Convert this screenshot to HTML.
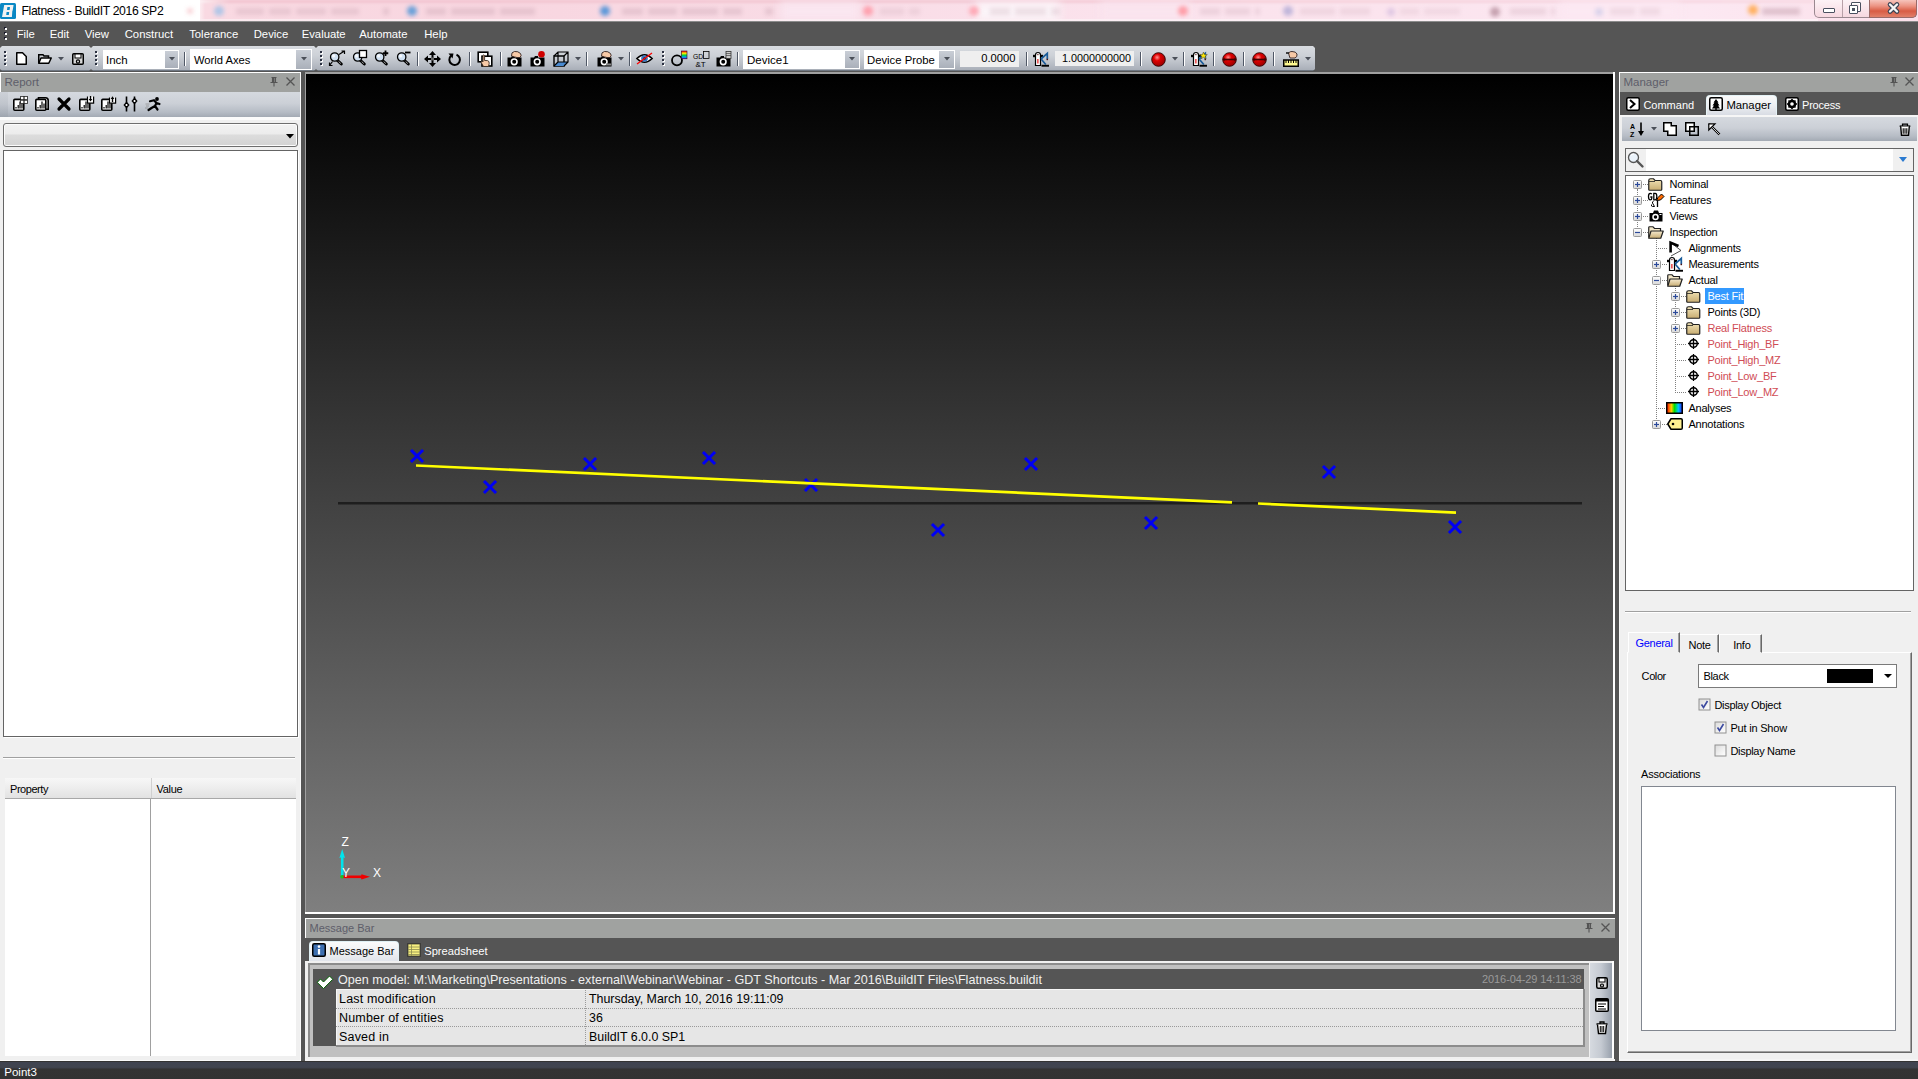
<!DOCTYPE html>
<html><head><meta charset="utf-8"><style>
*{margin:0;padding:0;box-sizing:border-box}
html,body{width:1918px;height:1079px;overflow:hidden;background:#555;font-family:"Liberation Sans",sans-serif;font-size:12px;color:#000;position:relative}
.a{position:absolute}
.t{position:absolute;line-height:1;white-space:nowrap}
svg{overflow:visible}
</style></head><body>
<div class="a" style="left:0px;top:0px;width:1918px;height:21px;background:linear-gradient(90deg,#fff 0,#fff 195px,#f9d9e2 205px,#f8d6e0 500px,#f9dce6 850px,#fbe2ec 1100px,#fbe4ee 1400px,#fce8f2 1700px,#fbe0ea 1918px)"></div>
<div class="a" style="left:0px;top:0px;width:1918px;height:3px;background:linear-gradient(90deg,#fff 0,#fff 190px,#f2c4d0 230px,#f3c8d3 900px,#f6d2dc 1300px,#f8dce6 1918px);filter:blur(1px)"></div>
<div class="a" style="left:0px;top:0px;width:200px;height:21px;background:#fff"></div>
<div class="a" style="left:975px;top:2px;width:85px;height:19px;background:#fbf4f8;filter:blur(4px)"></div>
<div class="a" style="left:780px;top:2px;width:80px;height:19px;background:#fae6f0;filter:blur(4px)"></div>
<div class="a" style="left:1100px;top:2px;width:90px;height:19px;background:#fae4ee;filter:blur(4px)"></div>
<div class="a" style="left:1560px;top:2px;width:120px;height:19px;background:#fce8f2;filter:blur(4px)"></div>
<div class="a" style="left:187px;top:8px;width:6px;height:6px;background:#f4b0b8;border-radius:50%;filter:blur(2px);opacity:0.6"></div>
<div class="a" style="left:214px;top:6px;width:10px;height:10px;background:#a8c4e8;border-radius:50%;filter:blur(2px);opacity:0.9"></div>
<div class="a" style="left:407px;top:6px;width:10px;height:10px;background:#5a9ad8;border-radius:50%;filter:blur(2px);opacity:0.9"></div>
<div class="a" style="left:600px;top:6px;width:10px;height:10px;background:#4a90d8;border-radius:50%;filter:blur(2px);opacity:0.9"></div>
<div class="a" style="left:863px;top:6px;width:10px;height:10px;background:#ff9aa8;border-radius:50%;filter:blur(2px);opacity:0.9"></div>
<div class="a" style="left:969px;top:6px;width:10px;height:10px;background:#ff9aa8;border-radius:50%;filter:blur(2px);opacity:0.8"></div>
<div class="a" style="left:1178px;top:6px;width:10px;height:10px;background:#ff96a0;border-radius:50%;filter:blur(2px);opacity:0.9"></div>
<div class="a" style="left:1283px;top:6px;width:10px;height:10px;background:#b8b0d8;border-radius:50%;filter:blur(2px);opacity:0.9"></div>
<div class="a" style="left:1387px;top:8px;width:8px;height:8px;background:#d8c0e0;border-radius:50%;filter:blur(2px);opacity:0.8"></div>
<div class="a" style="left:1490px;top:7px;width:10px;height:10px;background:#c09aa8;border-radius:50%;filter:blur(2px);opacity:0.9"></div>
<div class="a" style="left:1595px;top:8px;width:8px;height:8px;background:#d0cce8;border-radius:50%;filter:blur(2px);opacity:0.8"></div>
<div class="a" style="left:1748px;top:5px;width:10px;height:10px;background:#ffb060;border-radius:50%;filter:blur(2px);opacity:1"></div>
<div class="a" style="left:236px;top:8px;width:28px;height:7px;background:#c09aa8;filter:blur(2px);opacity:0.28"></div>
<div class="a" style="left:269px;top:8px;width:22px;height:7px;background:#c09aa8;filter:blur(2px);opacity:0.28"></div>
<div class="a" style="left:296px;top:8px;width:30px;height:7px;background:#c09aa8;filter:blur(2px);opacity:0.28"></div>
<div class="a" style="left:331px;top:8px;width:28px;height:7px;background:#c09aa8;filter:blur(2px);opacity:0.28"></div>
<div class="a" style="left:383px;top:8px;width:6px;height:7px;background:#c09aa8;filter:blur(2px);opacity:0.32"></div>
<div class="a" style="left:426px;top:8px;width:20px;height:7px;background:#c09aa8;filter:blur(2px);opacity:0.32"></div>
<div class="a" style="left:451px;top:8px;width:44px;height:7px;background:#c09aa8;filter:blur(2px);opacity:0.32"></div>
<div class="a" style="left:500px;top:8px;width:35px;height:7px;background:#c09aa8;filter:blur(2px);opacity:0.32"></div>
<div class="a" style="left:622px;top:8px;width:21px;height:7px;background:#c09aa8;filter:blur(2px);opacity:0.32"></div>
<div class="a" style="left:648px;top:8px;width:29px;height:7px;background:#c09aa8;filter:blur(2px);opacity:0.32"></div>
<div class="a" style="left:682px;top:8px;width:36px;height:7px;background:#c09aa8;filter:blur(2px);opacity:0.32"></div>
<div class="a" style="left:723px;top:8px;width:19px;height:7px;background:#c09aa8;filter:blur(2px);opacity:0.32"></div>
<div class="a" style="left:765px;top:8px;width:8px;height:7px;background:#c09aa8;filter:blur(2px);opacity:0.32"></div>
<div class="a" style="left:880px;top:8px;width:24px;height:7px;background:#c09aa8;filter:blur(2px);opacity:0.20"></div>
<div class="a" style="left:909px;top:8px;width:11px;height:7px;background:#c09aa8;filter:blur(2px);opacity:0.20"></div>
<div class="a" style="left:990px;top:8px;width:20px;height:7px;background:#c09aa8;filter:blur(2px);opacity:0.24"></div>
<div class="a" style="left:1015px;top:8px;width:31px;height:7px;background:#c09aa8;filter:blur(2px);opacity:0.24"></div>
<div class="a" style="left:1051px;top:8px;width:9px;height:7px;background:#c09aa8;filter:blur(2px);opacity:0.24"></div>
<div class="a" style="left:1200px;top:8px;width:20px;height:7px;background:#c09aa8;filter:blur(2px);opacity:0.24"></div>
<div class="a" style="left:1225px;top:8px;width:25px;height:7px;background:#c09aa8;filter:blur(2px);opacity:0.24"></div>
<div class="a" style="left:1255px;top:8px;width:5px;height:7px;background:#c09aa8;filter:blur(2px);opacity:0.24"></div>
<div class="a" style="left:1300px;top:8px;width:35px;height:7px;background:#c09aa8;filter:blur(2px);opacity:0.20"></div>
<div class="a" style="left:1340px;top:8px;width:30px;height:7px;background:#c09aa8;filter:blur(2px);opacity:0.20"></div>
<div class="a" style="left:1400px;top:8px;width:19px;height:7px;background:#c09aa8;filter:blur(2px);opacity:0.16"></div>
<div class="a" style="left:1424px;top:8px;width:36px;height:7px;background:#c09aa8;filter:blur(2px);opacity:0.16"></div>
<div class="a" style="left:1510px;top:8px;width:36px;height:7px;background:#c09aa8;filter:blur(2px);opacity:0.24"></div>
<div class="a" style="left:1551px;top:8px;width:4px;height:7px;background:#c09aa8;filter:blur(2px);opacity:0.24"></div>
<div class="a" style="left:1610px;top:8px;width:25px;height:7px;background:#c09aa8;filter:blur(2px);opacity:0.20"></div>
<div class="a" style="left:1640px;top:8px;width:20px;height:7px;background:#c09aa8;filter:blur(2px);opacity:0.20"></div>
<div class="a" style="left:1762px;top:8px;width:38px;height:7px;background:#c09aa8;filter:blur(2px);opacity:0.48"></div>
<div class="a" style="left:200px;top:19px;width:1618px;height:2px;background:linear-gradient(90deg,#fbeef2,#fdf4f8);opacity:.8"></div>
<svg class="a" style="left:0;top:0" width="17" height="21" viewBox="0 0 17 21"><path d="M1.5 2.9H14.5Q16 2.9 16 4.5V17.4Q16 19 14.5 19H1.5Q0 19 0 17.4V4.5Q0 2.9 1.5 2.9Z" fill="#0a88c4"/><path d="M4.2 5.1H13.6L12.7 10.3L12.3 11.2L11.9 16.9H2Z" fill="#f2f2f2"/><path d="M7.4 7.1H10L9.6 9.9H7Z M6.6 12.1H9.2L8.8 14.9H6.2Z" fill="#0a88c4"/></svg>
<div class="t" style="left:21.5px;top:5.00px;font-size:12.2px;color:#000;letter-spacing:-0.36px">Flatness - BuildIT 2016 SP2</div>
<div class="a" style="left:1814px;top:0px;width:103px;height:18px;border:1px solid #9a8890;border-top:none;border-radius:0 0 5px 5px;background:linear-gradient(#fdf2f6,#f6d8e0)"></div>
<div class="a" style="left:1842px;top:0px;width:1px;height:17px;background:#b8a0a8"></div>
<div class="a" style="left:1869px;top:0px;width:48px;height:18px;background:linear-gradient(#f6c4bc 0%,#ec9484 35%,#d85c44 65%,#e2806a 100%);border-radius:0 0 5px 0;border:1px solid #9a6a68;border-top:none"></div>
<div class="a" style="left:1823px;top:8px;width:12px;height:5px;background:#fff;border:1px solid #4a5060;border-radius:1px"></div>
<div class="a" style="left:1851px;top:2px;width:10px;height:10px;border:1.5px solid #4a5060;background:transparent;border-radius:1px;box-shadow:inset 0 0 0 1px #fff"></div>
<div class="a" style="left:1849px;top:5px;width:9px;height:9px;border:1.5px solid #4a5060;background:#fff;box-shadow:inset 0 0 0 1.5px #fff;border-radius:1px"></div>
<div class="a" style="left:1852px;top:8px;width:3px;height:3px;background:#4a5060"></div>
<svg class="a" style="left:1886px;top:2px" width="15" height="12" viewBox="0 0 15 12"><path d="M4 2.5L11 9.5M11 2.5L4 9.5" stroke="#3c4454" stroke-width="4.6" stroke-linecap="round"/><path d="M4 2.5L11 9.5M11 2.5L4 9.5" stroke="#f4f4f4" stroke-width="2.4" stroke-linecap="round"/></svg>
<div class="a" style="left:0px;top:21px;width:1918px;height:1px;background:#8c8c8c"></div>
<div class="a" style="left:0px;top:22px;width:1918px;height:24px;background:#555"></div>
<div class="a" style="left:5px;top:28px;width:2px;height:2px;background:#fff;box-shadow:-1px -1px 0 #1a1a2a"></div>
<div class="a" style="left:5px;top:33px;width:2px;height:2px;background:#fff;box-shadow:-1px -1px 0 #1a1a2a"></div>
<div class="a" style="left:5px;top:38px;width:2px;height:2px;background:#fff;box-shadow:-1px -1px 0 #1a1a2a"></div>
<div class="t" style="left:16.7px;top:29.00px;font-size:11.3px;color:#fff;">File</div>
<div class="t" style="left:49.7px;top:29.00px;font-size:11.3px;color:#fff;">Edit</div>
<div class="t" style="left:84.7px;top:29.00px;font-size:11.3px;color:#fff;">View</div>
<div class="t" style="left:124.7px;top:29.00px;font-size:11.3px;color:#fff;">Construct</div>
<div class="t" style="left:189.2px;top:29.00px;font-size:11.3px;color:#fff;">Tolerance</div>
<div class="t" style="left:253.7px;top:29.00px;font-size:11.3px;color:#fff;">Device</div>
<div class="t" style="left:301.7px;top:29.00px;font-size:11.3px;color:#fff;">Evaluate</div>
<div class="t" style="left:359.2px;top:29.00px;font-size:11.3px;color:#fff;">Automate</div>
<div class="t" style="left:424.2px;top:29.00px;font-size:11.3px;color:#fff;">Help</div>
<div class="a" style="left:0px;top:46px;width:91px;height:25px;background:linear-gradient(#d8dbe0 0%,#cdd1d7 40%,#b9bec6 75%,#a9afb8 100%);border-bottom:1px solid #6f7782;clip-path:polygon(2px 0,89px 0,91px 2px,91px 23px,89px 25px,2px 25px,0 23px,0 2px)"></div>
<div class="a" style="left:91px;top:46px;width:225px;height:25px;background:linear-gradient(#d8dbe0 0%,#cdd1d7 40%,#b9bec6 75%,#a9afb8 100%);border-bottom:1px solid #6f7782;clip-path:polygon(2px 0,223px 0,225px 2px,225px 23px,223px 25px,2px 25px,0 23px,0 2px)"></div>
<div class="a" style="left:316px;top:46px;width:999px;height:25px;background:linear-gradient(#d8dbe0 0%,#cdd1d7 40%,#b9bec6 75%,#a9afb8 100%);border-bottom:1px solid #6f7782;clip-path:polygon(2px 0,997px 0,999px 2px,999px 23px,997px 25px,2px 25px,0 23px,0 2px)"></div>
<div class="a" style="left:5px;top:52px;width:2px;height:2px;background:#fff"></div>
<div class="a" style="left:4px;top:51px;width:2px;height:2px;background:#2a3040"></div>
<div class="a" style="left:5px;top:56px;width:2px;height:2px;background:#fff"></div>
<div class="a" style="left:4px;top:55px;width:2px;height:2px;background:#2a3040"></div>
<div class="a" style="left:5px;top:60px;width:2px;height:2px;background:#fff"></div>
<div class="a" style="left:4px;top:59px;width:2px;height:2px;background:#2a3040"></div>
<div class="a" style="left:5px;top:64px;width:2px;height:2px;background:#fff"></div>
<div class="a" style="left:4px;top:63px;width:2px;height:2px;background:#2a3040"></div>
<div class="a" style="left:96px;top:52px;width:2px;height:2px;background:#fff"></div>
<div class="a" style="left:95px;top:51px;width:2px;height:2px;background:#2a3040"></div>
<div class="a" style="left:96px;top:56px;width:2px;height:2px;background:#fff"></div>
<div class="a" style="left:95px;top:55px;width:2px;height:2px;background:#2a3040"></div>
<div class="a" style="left:96px;top:60px;width:2px;height:2px;background:#fff"></div>
<div class="a" style="left:95px;top:59px;width:2px;height:2px;background:#2a3040"></div>
<div class="a" style="left:96px;top:64px;width:2px;height:2px;background:#fff"></div>
<div class="a" style="left:95px;top:63px;width:2px;height:2px;background:#2a3040"></div>
<div class="a" style="left:321px;top:52px;width:2px;height:2px;background:#fff"></div>
<div class="a" style="left:320px;top:51px;width:2px;height:2px;background:#2a3040"></div>
<div class="a" style="left:321px;top:56px;width:2px;height:2px;background:#fff"></div>
<div class="a" style="left:320px;top:55px;width:2px;height:2px;background:#2a3040"></div>
<div class="a" style="left:321px;top:60px;width:2px;height:2px;background:#fff"></div>
<div class="a" style="left:320px;top:59px;width:2px;height:2px;background:#2a3040"></div>
<div class="a" style="left:321px;top:64px;width:2px;height:2px;background:#fff"></div>
<div class="a" style="left:320px;top:63px;width:2px;height:2px;background:#2a3040"></div>
<div class="a" style="left:663px;top:52px;width:2px;height:2px;background:#fff"></div>
<div class="a" style="left:662px;top:51px;width:2px;height:2px;background:#2a3040"></div>
<div class="a" style="left:663px;top:56px;width:2px;height:2px;background:#fff"></div>
<div class="a" style="left:662px;top:55px;width:2px;height:2px;background:#2a3040"></div>
<div class="a" style="left:663px;top:60px;width:2px;height:2px;background:#fff"></div>
<div class="a" style="left:662px;top:59px;width:2px;height:2px;background:#2a3040"></div>
<div class="a" style="left:663px;top:64px;width:2px;height:2px;background:#fff"></div>
<div class="a" style="left:662px;top:63px;width:2px;height:2px;background:#2a3040"></div>
<svg class="a" style="left:16px;top:52px" width="11" height="13" viewBox="0 0 11 13"><path d="M0.75 0.75H6.5L10.25 4.5V12.25H0.75Z" fill="#fff" stroke="#000" stroke-width="1.5" stroke-linejoin="round"/></svg>
<svg class="a" style="left:38px;top:54px" width="14" height="10" viewBox="0 0 14 10"><path d="M0.75 9.25V0.75H5L6 2H10.5V4" fill="none" stroke="#000" stroke-width="1.5"/><path d="M0.75 9.25L3 4H13.25L10.75 9.25Z" fill="#fff" stroke="#000" stroke-width="1.5" stroke-linejoin="round"/></svg>
<svg class="a" style="left:58px;top:57px" width="6" height="4" viewBox="0 0 6 4"><path d="M0 0H6L3 3.5Z" fill="#4a4f58"/></svg>
<svg class="a" style="left:72px;top:53px" width="12" height="12" viewBox="0 0 12 12"><rect x="0.75" y="0.75" width="10.5" height="10.5" rx="1" fill="#d8d8d8" stroke="#000" stroke-width="1.5"/><rect x="3" y="1" width="6" height="4" fill="#fff" stroke="#000" stroke-width="1"/><circle cx="6" cy="8.5" r="1.6" fill="none" stroke="#000" stroke-width="1.2"/></svg>
<div class="a" style="left:103px;top:50px;width:76px;height:19px;background:#fff"></div>
<div class="a" style="left:165px;top:51px;width:13px;height:17px;background:linear-gradient(#c9ced6,#aab0ba)"></div>
<svg class="a" style="left:168.5px;top:57px" width="6" height="4" viewBox="0 0 6 4"><path d="M0 0H6L3 3.5Z" fill="#4a4f58"/></svg>
<div class="t" style="left:106px;top:55.00px;font-size:11.5px;color:#000;">Inch</div>
<div class="a" style="left:184px;top:52px;width:1px;height:14px;background:#505866"></div>
<div class="a" style="left:185px;top:52px;width:1px;height:14px;background:#fff"></div>
<div class="a" style="left:190px;top:49px;width:122px;height:21px;background:#fff"></div>
<div class="a" style="left:296px;top:50px;width:15px;height:19px;background:linear-gradient(#c9ced6,#aab0ba)"></div>
<svg class="a" style="left:300.5px;top:57px" width="6" height="4" viewBox="0 0 6 4"><path d="M0 0H6L3 3.5Z" fill="#4a4f58"/></svg>
<div class="t" style="left:194px;top:55.00px;font-size:11.2px;color:#000;">World Axes</div>
<svg class="a" style="left:329px;top:51px" width="17" height="16" viewBox="0 0 17 16"><path d="M8 9L12.3 13" stroke="#000" stroke-width="3" stroke-linecap="round"/><path d="M8.5 9.5L12 12.7" stroke="#fff" stroke-width=".9" stroke-dasharray="1 1"/><circle cx="5.7" cy="6" r="4.2" fill="#cfe0f2" stroke="#000" stroke-width="1.3"/><circle cx="4.6" cy="4.9" r="1.6" fill="#fff" opacity=".8"/><path d="M10 3.5L15.5 0M12.5 0H15.5V3M3.5 10.5L0.5 14.5M0.5 11.5V14.5H3.5" stroke="#000" stroke-width="1.2" fill="none"/></svg>
<svg class="a" style="left:352px;top:51px" width="17" height="16" viewBox="0 0 17 16"><path d="M8 9L12.3 13" stroke="#000" stroke-width="3" stroke-linecap="round"/><path d="M8.5 9.5L12 12.7" stroke="#fff" stroke-width=".9" stroke-dasharray="1 1"/><circle cx="5.7" cy="6" r="4.2" fill="#cfe0f2" stroke="#000" stroke-width="1.3"/><circle cx="4.6" cy="4.9" r="1.6" fill="#fff" opacity=".8"/><rect x="7.5" y="-0.5" width="7" height="7" fill="#fff" stroke="#000" stroke-width="1.3"/></svg>
<svg class="a" style="left:374px;top:51px" width="17" height="16" viewBox="0 0 17 16"><path d="M8 9L12.3 13" stroke="#000" stroke-width="3" stroke-linecap="round"/><path d="M8.5 9.5L12 12.7" stroke="#fff" stroke-width=".9" stroke-dasharray="1 1"/><circle cx="5.7" cy="6" r="4.2" fill="#cfe0f2" stroke="#000" stroke-width="1.3"/><circle cx="4.6" cy="4.9" r="1.6" fill="#fff" opacity=".8"/><path d="M11.5 -0.5V5M8.75 2.25H14.25" stroke="#000" stroke-width="1.8"/></svg>
<svg class="a" style="left:396px;top:51px" width="17" height="16" viewBox="0 0 17 16"><path d="M8 9L12.3 13" stroke="#000" stroke-width="3" stroke-linecap="round"/><path d="M8.5 9.5L12 12.7" stroke="#fff" stroke-width=".9" stroke-dasharray="1 1"/><circle cx="5.7" cy="6" r="4.2" fill="#cfe0f2" stroke="#000" stroke-width="1.3"/><circle cx="4.6" cy="4.9" r="1.6" fill="#fff" opacity=".8"/><path d="M9 1.5H14.5" stroke="#000" stroke-width="1.8"/></svg>
<div class="a" style="left:417px;top:52px;width:1px;height:14px;background:#505866"></div>
<div class="a" style="left:418px;top:52px;width:1px;height:14px;background:#fff"></div>
<svg class="a" style="left:424px;top:51px" width="17" height="16" viewBox="0 0 17 16"><path d="M8.5 0L12 4H5Z M8.5 16L12 12H5Z M0 8L4 4.5V11.5Z M17 8L13 4.5V11.5Z" fill="#000"/><path d="M8.5 3V13M3 8H14" stroke="#000" stroke-width="2"/><path d="M7 6.5H10V9.5H7Z" fill="#666"/></svg>
<svg class="a" style="left:448px;top:53px" width="14" height="13" viewBox="0 0 14 13"><path d="M3 2.8A5.3 5.3 0 1 0 8.5 1.7" fill="none" stroke="#000" stroke-width="2"/><path d="M0.5 0.5L5.5 0.5L4.5 5.5Z" fill="#000"/></svg>
<div class="a" style="left:469px;top:52px;width:1px;height:14px;background:#505866"></div>
<div class="a" style="left:470px;top:52px;width:1px;height:14px;background:#fff"></div>
<svg class="a" style="left:477px;top:51px" width="17" height="17" viewBox="0 0 17 17"><rect x="1.2" y="1.2" width="9.6" height="9.6" fill="#fff" stroke="#000" stroke-width="1.6"/><rect x="5" y="5.2" width="9.8" height="9.8" fill="#fff" stroke="#000" stroke-width="1.6"/><path d="M6 4.5Q6.8 3.2 7.6 4.5V9.5L10.5 9.6Q12.5 10 12.2 12.5L11.5 15.5H6.5L4.2 11.5Q3.8 10 5.2 10.3L6 11Z" fill="#f7c9a6" stroke="#3a2a20" stroke-width=".9"/></svg>
<div class="a" style="left:500px;top:52px;width:1px;height:14px;background:#505866"></div>
<div class="a" style="left:501px;top:52px;width:1px;height:14px;background:#fff"></div>
<svg class="a" style="left:507px;top:51px" width="16" height="16" viewBox="0 0 16 16"><path d="M0.5 6.5H4L5 5H8V6.5H14.5V15.5H0.5Z" fill="#000"/><circle cx="7.2" cy="10.8" r="2.8" fill="none" stroke="#fff" stroke-width="1.6"/><path d="M4.5 5Q4 1 7.5 0.5Q11 0 13.5 2.5Q15 4.5 13 6.5L10 6.5Q7 6 4.5 5Z" fill="#f7c9a6" stroke="#302020" stroke-width="0.9"/></svg>
<svg class="a" style="left:530px;top:51px" width="16" height="16" viewBox="0 0 16 16"><path d="M0.5 6.5H4L5 5H8V6.5H14.5V15.5H0.5Z" fill="#000"/><circle cx="7.2" cy="10.8" r="2.8" fill="none" stroke="#fff" stroke-width="1.6"/><circle cx="11.5" cy="3.3" r="3.3" fill="#d00000"/></svg>
<svg class="a" style="left:553px;top:51px" width="16" height="16" viewBox="0 0 16 16"><path d="M1 15H11V5H1Z" fill="none" stroke="#000" stroke-width="1.4"/><path d="M1 15L5 11H15L11 15Z" fill="#4a8ad0"/><path d="M1 5L5 1H15V11L11 15M11 5L15 1M5 1V11H15M1 15L5 11" fill="none" stroke="#000" stroke-width="1.2"/></svg>
<svg class="a" style="left:574.5px;top:57px" width="6" height="4" viewBox="0 0 6 4"><path d="M0 0H6L3 3.5Z" fill="#4a4f58"/></svg>
<div class="a" style="left:586px;top:52px;width:1px;height:14px;background:#505866"></div>
<div class="a" style="left:587px;top:52px;width:1px;height:14px;background:#fff"></div>
<svg class="a" style="left:597px;top:51px" width="16" height="16" viewBox="0 0 16 16"><path d="M0.5 6.5H4L5 5H8V6.5H14.5V15.5H0.5Z" fill="#000"/><circle cx="7.2" cy="10.8" r="2.8" fill="none" stroke="#fff" stroke-width="1.6"/><path d="M4.5 5Q4 1 7.5 0.5Q11 0 13.5 2.5Q15 4.5 13 6.5L10 6.5Q7 6 4.5 5Z" fill="#f7c9a6" stroke="#302020" stroke-width="0.9"/><rect x="9" y="12.5" width="5" height="2" fill="#888"/></svg>
<svg class="a" style="left:617.5px;top:57px" width="6" height="4" viewBox="0 0 6 4"><path d="M0 0H6L3 3.5Z" fill="#4a4f58"/></svg>
<div class="a" style="left:629px;top:52px;width:1px;height:14px;background:#505866"></div>
<div class="a" style="left:630px;top:52px;width:1px;height:14px;background:#fff"></div>
<svg class="a" style="left:636px;top:53px" width="17" height="11" viewBox="0 0 17 11"><path d="M0.8 5.5Q8.5 -2 16.2 5.5Q8.5 13 0.8 5.5Z" fill="#fff" stroke="#000" stroke-width="1.4"/><circle cx="8.5" cy="5.5" r="3.3" fill="#3a78c0"/><circle cx="8.5" cy="5.5" r="1.3" fill="#123"/><path d="M1 11L16 0" stroke="#ff0000" stroke-width="1.3"/></svg>
<svg class="a" style="left:670px;top:50px" width="18" height="17" viewBox="0 0 18 17"><defs><linearGradient id="rb" x1="0" y1="0" x2="0" y2="1"><stop offset="0" stop-color="#ff0000"/><stop offset=".3" stop-color="#ffee00"/><stop offset=".55" stop-color="#00d040"/><stop offset=".8" stop-color="#00a0ff"/><stop offset="1" stop-color="#6000c0"/></linearGradient></defs><circle cx="7" cy="10.3" r="5" fill="none" stroke="#000" stroke-width="1.8"/><rect x="11.3" y="1" width="5.7" height="7.8" fill="url(#rb)" stroke="#300030" stroke-width=".6"/></svg>
<svg class="a" style="left:693px;top:51px" width="17" height="16" viewBox="0 0 17 16"><text x="0" y="7.5" font-family="Liberation Sans" font-size="8" fill="#000" transform="scale(.85 1)">GD</text><rect x="10.5" y="0.5" width="5.5" height="7" fill="none" stroke="#000" stroke-width="0.8"/><text x="2.5" y="15.5" font-family="Liberation Sans" font-size="8" fill="#000">&amp;T</text></svg>
<svg class="a" style="left:716px;top:51px" width="16" height="16" viewBox="0 0 16 16"><path d="M0.5 6.5H4L5 5H8V6.5H14.5V15.5H0.5Z" fill="#000"/><circle cx="7.2" cy="10.8" r="2.8" fill="none" stroke="#fff" stroke-width="1.6"/><rect x="10" y="0.5" width="5" height="7" fill="#ccc" stroke="#333" stroke-width="0.8"/><path d="M10 2.5H15M10 4.5H15" stroke="#333" stroke-width=".6"/></svg>
<div class="a" style="left:737px;top:52px;width:1px;height:14px;background:#505866"></div>
<div class="a" style="left:738px;top:52px;width:1px;height:14px;background:#fff"></div>
<div class="a" style="left:743px;top:50px;width:117px;height:19px;background:#fff"></div>
<div class="a" style="left:845px;top:51px;width:14px;height:17px;background:linear-gradient(#c9ced6,#aab0ba)"></div>
<svg class="a" style="left:849.0px;top:57px" width="6" height="4" viewBox="0 0 6 4"><path d="M0 0H6L3 3.5Z" fill="#4a4f58"/></svg>
<div class="t" style="left:747px;top:55.00px;font-size:11.5px;color:#000;">Device1</div>
<div class="a" style="left:864px;top:50px;width:91px;height:19px;background:#fff"></div>
<div class="a" style="left:939px;top:51px;width:15px;height:17px;background:linear-gradient(#c9ced6,#aab0ba)"></div>
<svg class="a" style="left:943.5px;top:57px" width="6" height="4" viewBox="0 0 6 4"><path d="M0 0H6L3 3.5Z" fill="#4a4f58"/></svg>
<div class="t" style="left:867px;top:55.00px;font-size:11.3px;color:#000;">Device Probe</div>
<div class="a" style="left:960px;top:51px;width:59px;height:16px;background:#efefef"></div>
<div class="t" style="right:902.5px;top:53.00px;font-size:11.2px;color:#000;">0.0000</div>
<div class="a" style="left:1026px;top:52px;width:1px;height:14px;background:#505866"></div>
<div class="a" style="left:1027px;top:52px;width:1px;height:14px;background:#fff"></div>
<svg class="a" style="left:1033px;top:51px" width="17" height="16" viewBox="0 0 17 16"><rect x="0" y="3.8" width="3" height="2.4" fill="#000"/><rect x="7" y="3.8" width="3" height="2.4" fill="#000"/><path d="M2.5 14.5V4Q2.5 1.5 5 1.5Q7.5 1.5 7.5 4V14.5Z" fill="#fff" stroke="#000" stroke-width="1.2"/><rect x="4.3" y="3" width="1.2" height="1.2" fill="#602020"/><path d="M4.9 8V12.5" stroke="#e00000" stroke-width="1.1"/><path d="M8 8L14.3 2.3V8.5M8.3 8.2L12.8 13.5" stroke="#1a5c9a" stroke-width="1.7" fill="none"/><rect x="13.6" y="7.8" width="1.4" height="1.4" fill="#501010"/><rect x="8.5" y="13.8" width="7.5" height="1.9" fill="#000"/></svg>
<div class="a" style="left:1055px;top:51px;width:79px;height:15px;background:#efefef"></div>
<div class="t" style="left:1062px;top:53.00px;font-size:10.8px;color:#000;">1.0000000000</div>
<div class="a" style="left:1140px;top:52px;width:1px;height:14px;background:#505866"></div>
<div class="a" style="left:1141px;top:52px;width:1px;height:14px;background:#fff"></div>
<svg class="a" style="left:1150.5px;top:51.5px" width="15" height="15" viewBox="0 0 15 15"><defs><radialGradient id="rg1158" cx=".4" cy=".35" r=".7"><stop offset="0" stop-color="#ff9090"/><stop offset=".35" stop-color="#e00000"/><stop offset="1" stop-color="#900000"/></radialGradient></defs><circle cx="7.5" cy="7.5" r="6.8" fill="url(#rg1158)" stroke="#300000" stroke-width=".9"/></svg>
<svg class="a" style="left:1171.5px;top:57px" width="6" height="4" viewBox="0 0 6 4"><path d="M0 0H6L3 3.5Z" fill="#4a4f58"/></svg>
<div class="a" style="left:1183px;top:52px;width:1px;height:14px;background:#505866"></div>
<div class="a" style="left:1184px;top:52px;width:1px;height:14px;background:#fff"></div>
<svg class="a" style="left:1191px;top:51px" width="17" height="16" viewBox="0 0 17 16"><rect x="0" y="3.8" width="3" height="2.4" fill="#000"/><rect x="7" y="3.8" width="3" height="2.4" fill="#000"/><path d="M2.5 14.5V4Q2.5 1.5 5 1.5Q7.5 1.5 7.5 4V14.5Z" fill="#fff" stroke="#000" stroke-width="1.2"/><rect x="4.3" y="3" width="1.2" height="1.2" fill="#602020"/><path d="M4.9 8V12.5" stroke="#e00000" stroke-width="1.1"/><path d="M8 8L14.3 2.3V8.5M8.3 8.2L12.8 13.5" stroke="#1a5c9a" stroke-width="1.7" fill="none"/><rect x="13.6" y="7.8" width="1.4" height="1.4" fill="#501010"/><rect x="8.5" y="13.8" width="7.5" height="1.9" fill="#000"/><path d="M12.5 1L13.6 3.6H16.3L14.2 5.2L15 7.8L12.5 6.3L10 7.8L10.8 5.2L8.7 3.6H11.4Z" fill="#ffe800" stroke="#333" stroke-width=".5"/></svg>
<div class="a" style="left:1213px;top:52px;width:1px;height:14px;background:#505866"></div>
<div class="a" style="left:1214px;top:52px;width:1px;height:14px;background:#fff"></div>
<svg class="a" style="left:1221.5px;top:51.5px" width="15" height="15" viewBox="0 0 15 15"><defs><radialGradient id="rg1229" cx=".4" cy=".35" r=".7"><stop offset="0" stop-color="#ff9090"/><stop offset=".35" stop-color="#e00000"/><stop offset="1" stop-color="#900000"/></radialGradient></defs><circle cx="7.5" cy="7.5" r="6.8" fill="url(#rg1229)" stroke="#300000" stroke-width=".9"/><path d="M1 7.5H14" stroke="#400000" stroke-width="1.6"/><path d="M0.5 7.5L2.5 5.8V9.2ZM14.5 7.5L12.5 5.8V9.2Z" fill="#400000"/></svg>
<div class="a" style="left:1243px;top:52px;width:1px;height:14px;background:#505866"></div>
<div class="a" style="left:1244px;top:52px;width:1px;height:14px;background:#fff"></div>
<svg class="a" style="left:1251.5px;top:51.5px" width="15" height="15" viewBox="0 0 15 15"><defs><radialGradient id="rg1259" cx=".4" cy=".35" r=".7"><stop offset="0" stop-color="#ff9090"/><stop offset=".35" stop-color="#e00000"/><stop offset="1" stop-color="#900000"/></radialGradient></defs><circle cx="7.5" cy="7.5" r="6.8" fill="url(#rg1259)" stroke="#300000" stroke-width=".9"/><path d="M1 7.5H14" stroke="#400000" stroke-width="1.6"/><path d="M0.5 7.5L2.5 5.8V9.2ZM14.5 7.5L12.5 5.8V9.2Z" fill="#400000"/></svg>
<div class="a" style="left:1273px;top:52px;width:1px;height:14px;background:#505866"></div>
<div class="a" style="left:1274px;top:52px;width:1px;height:14px;background:#fff"></div>
<svg class="a" style="left:1283px;top:51px" width="16" height="16" viewBox="0 0 16 16"><path d="M6 4Q5 0.5 9 0.5Q13 0.5 14 3Q14.5 6 12 7H7Z" fill="#f7c9a6" stroke="#302020" stroke-width=".9"/><path d="M3 2H6" stroke="#000" stroke-width="1.4"/><rect x="0.75" y="9" width="14.5" height="6.25" fill="#fffa90" stroke="#000" stroke-width="1.5"/><path d="M3 9V12M5.5 9V12M8 9V12M10.5 9V12M13 9V12" stroke="#000" stroke-width="1"/></svg>
<svg class="a" style="left:1304.5px;top:57px" width="6" height="4" viewBox="0 0 6 4"><path d="M0 0H6L3 3.5Z" fill="#4a4f58"/></svg>
<div class="a" style="left:0px;top:71px;width:1918px;height:1px;background:#555"></div>
<div class="a" style="left:0px;top:72px;width:301px;height:989px;background:#f0f0f0"></div>
<div class="a" style="left:0px;top:72px;width:301px;height:1px;background:#fff"></div>
<div class="a" style="left:0px;top:72px;width:1px;height:20px;background:#fff"></div>
<div class="a" style="left:300px;top:72px;width:1px;height:989px;background:#fafafa"></div>
<div class="a" style="left:1px;top:73px;width:299px;height:19px;background:#a0a2a0"></div>
<div class="t" style="left:4.5px;top:77.00px;font-size:11.5px;color:#5e5e6a;">Report</div>
<svg class="a" style="left:270px;top:77px" width="8" height="10" viewBox="0 0 8 10"><path d="M1.5 0.5H6.5M2.5 0.5V5.5M5.5 0.5V5.5M0.5 5.5H7.5M4 5.5V9.5" stroke="#555" stroke-width="1.1" fill="none"/><rect x="2.5" y="0.5" width="2" height="5" fill="#555"/></svg>
<svg class="a" style="left:286px;top:77px" width="9" height="9" viewBox="0 0 9 9"><path d="M0.5 0.5L8.5 8.5M8.5 0.5L0.5 8.5" stroke="#555" stroke-width="1.3"/></svg>
<div class="a" style="left:0px;top:92px;width:300px;height:25px;background:linear-gradient(#d5d9df 0%,#ccd0d7 45%,#b6bcc5 80%,#a3aab4 100%)"></div>
<div class="a" style="left:0px;top:92px;width:8px;height:25px;background:linear-gradient(#c8ccd3,#b8bdc5 50%,#9aa1ab);opacity:.6"></div>
<div class="a" style="left:0px;top:117px;width:300px;height:3px;background:#fbfbfb"></div>
<svg class="a" style="left:13px;top:96px" width="16" height="16" viewBox="0 0 16 16"><rect x="0.8" y="3.4" width="10" height="10.8" rx="1" fill="#fff" stroke="#000" stroke-width="1.6"/><path d="M3 12.5V11M5.2 12.5V9M7 12.5V5.5M9 12.5V7.5" stroke="#000" stroke-width="1.2"/><rect x="7.2" y="0" width="7.6" height="7.9" fill="#222"/><rect x="8" y="0.8" width="2.4" height="2.4" fill="#fff"/><rect x="11.6" y="0.8" width="2.4" height="2.4" fill="#fff"/><rect x="8" y="4.7" width="2.4" height="2.4" fill="#fff"/><rect x="11.6" y="4.7" width="2.4" height="2.4" fill="#fff"/></svg>
<svg class="a" style="left:35px;top:96px" width="16" height="16" viewBox="0 0 16 16"><path d="M3.5 3V1.8H10.5Q13.2 1.8 13.2 4.5V13.2H11" fill="#fff" stroke="#000" stroke-width="1.6"/><rect x="0.8" y="3.4" width="10" height="10.8" rx="1" fill="#fff" stroke="#000" stroke-width="1.6"/><path d="M3 12.5V11M5.2 12.5V9M7 12.5V5.5M9 12.5V7.5" stroke="#000" stroke-width="1.2"/></svg>
<svg class="a" style="left:57px;top:97px" width="14" height="14" viewBox="0 0 14 14"><path d="M2 2L12 12M12 2L2 12" stroke="#000" stroke-width="3.2" stroke-linecap="round"/></svg>
<svg class="a" style="left:79px;top:96px" width="16" height="16" viewBox="0 0 16 16"><rect x="0.8" y="3.4" width="10" height="10.8" rx="1" fill="#fff" stroke="#000" stroke-width="1.6"/><path d="M3 12.5V11M5.2 12.5V9M7 12.5V5.5M9 12.5V7.5" stroke="#000" stroke-width="1.2"/><path d="M8.5 0.6V7.2H14.6V0.6" fill="#fff" stroke="#000" stroke-width="1.2"/><path d="M11.5 0V3.5" stroke="#000" stroke-width="1.4"/><path d="M9.6 3H13.4L11.5 5.6Z" fill="#000"/></svg>
<svg class="a" style="left:101px;top:96px" width="16" height="16" viewBox="0 0 16 16"><rect x="0.8" y="3.4" width="10" height="10.8" rx="1" fill="#fff" stroke="#000" stroke-width="1.6"/><path d="M3 12.5V11M5.2 12.5V9M7 12.5V5.5M9 12.5V7.5" stroke="#000" stroke-width="1.2"/><path d="M8.5 1.5V7.2H14.6V1.5" fill="#fff" stroke="#000" stroke-width="1.2"/><path d="M11.5 6V2.5" stroke="#000" stroke-width="1.4"/><path d="M9.6 3H13.4L11.5 0.2Z" fill="#000"/></svg>
<svg class="a" style="left:124px;top:96px" width="13" height="16" viewBox="0 0 13 16"><path d="M2.5 0.5V15.5M10.5 0.5V15.5" stroke="#000" stroke-width="1.6"/><path d="M2.5 6.5L4.7 9L2.5 11.5L0.3 9Z" fill="#fff" stroke="#000" stroke-width="1.3"/><path d="M10.5 2.5L12.7 5L10.5 7.5L8.3 5Z" fill="#fff" stroke="#000" stroke-width="1.3"/></svg>
<svg class="a" style="left:145px;top:97px" width="16" height="14" viewBox="0 0 16 14"><circle cx="12" cy="2" r="1.9" fill="#000"/><path d="M5 4.2L9 3.2L11.5 6L10 9L12.5 12.5M10 9L6.5 11L3.5 13M11.5 6L14.5 7" stroke="#000" stroke-width="2.2" fill="none" stroke-linecap="round" stroke-linejoin="round"/><path d="M0.5 7H4.5M1 9H4M0 11H3" stroke="#888" stroke-width=".7"/></svg>
<div class="a" style="left:3px;top:123px;width:295px;height:24px;border:1px solid #6e6e6e;border-radius:3px;background:linear-gradient(#f2f2f2 0%,#ececec 45%,#dcdcdc 50%,#d3d3d3 100%);box-shadow:inset 0 0 0 1px #fcfcfc"></div>
<svg class="a" style="left:286px;top:134px" width="8" height="5" viewBox="0 0 8 5"><path d="M0 0H8L4 4.5Z" fill="#000"/></svg>
<div class="a" style="left:3px;top:150px;width:295px;height:587px;background:#fff;border:1px solid #646464;box-shadow:1px 1px 0 #fff"></div>
<div class="a" style="left:3px;top:757px;width:292px;height:1px;background:#a0a0a0"></div>
<div class="a" style="left:3px;top:758px;width:292px;height:1px;background:#fff"></div>
<div class="a" style="left:5px;top:778px;width:291px;height:21px;background:linear-gradient(#f7f7f7,#ededed 50%,#e2e2e2);border-bottom:1px solid #a8a8a8"></div>
<div class="a" style="left:151px;top:778px;width:1px;height:20px;background:#d0d0d0"></div>
<div class="t" style="left:10px;top:784.00px;font-size:11px;color:#000;letter-spacing:-0.45px">Property</div>
<div class="t" style="left:156.5px;top:784.00px;font-size:11px;color:#000;letter-spacing:-0.3px">Value</div>
<div class="a" style="left:5px;top:799px;width:291px;height:257px;background:#fff"></div>
<div class="a" style="left:150px;top:799px;width:1px;height:257px;background:#a0a0a0"></div>
<div class="a" style="left:305px;top:72px;width:1310px;height:842px;background:#a0a0a0"></div>
<div class="a" style="left:1613px;top:72px;width:2px;height:842px;background:#fff"></div>
<div class="a" style="left:305px;top:912px;width:1310px;height:2px;background:#fff"></div>
<div class="a" style="left:306px;top:74px;width:1307px;height:838px;background:linear-gradient(#000 0%,#0a0a0a 8%,#404040 50%,#7f7f7f 100%)"></div>
<svg class="a" style="left:306px;top:74px" width="1307" height="838" viewBox="0 0 1307 838"><path d="M32 429.3H1276" stroke="#1e1e1e" stroke-width="2.6"/></svg>
<svg class="a" style="left:409.5px;top:448.5px" width="14" height="14" viewBox="0 0 14 14"><path d="M2 2L12 12M12 2L2 12" stroke="#0000f4" stroke-width="3" stroke-linecap="square"/></svg>
<svg class="a" style="left:482.5px;top:480.4px" width="14" height="14" viewBox="0 0 14 14"><path d="M2 2L12 12M12 2L2 12" stroke="#0000f4" stroke-width="3" stroke-linecap="square"/></svg>
<svg class="a" style="left:583px;top:457.4px" width="14" height="14" viewBox="0 0 14 14"><path d="M2 2L12 12M12 2L2 12" stroke="#0000f4" stroke-width="3" stroke-linecap="square"/></svg>
<svg class="a" style="left:701.7px;top:451.4px" width="14" height="14" viewBox="0 0 14 14"><path d="M2 2L12 12M12 2L2 12" stroke="#0000f4" stroke-width="3" stroke-linecap="square"/></svg>
<svg class="a" style="left:803.5px;top:478px" width="14" height="14" viewBox="0 0 14 14"><path d="M2 2L12 12M12 2L2 12" stroke="#0000f4" stroke-width="3" stroke-linecap="square"/></svg>
<svg class="a" style="left:931px;top:523px" width="14" height="14" viewBox="0 0 14 14"><path d="M2 2L12 12M12 2L2 12" stroke="#0000f4" stroke-width="3" stroke-linecap="square"/></svg>
<svg class="a" style="left:1024px;top:457.4px" width="14" height="14" viewBox="0 0 14 14"><path d="M2 2L12 12M12 2L2 12" stroke="#0000f4" stroke-width="3" stroke-linecap="square"/></svg>
<svg class="a" style="left:1144px;top:515.9px" width="14" height="14" viewBox="0 0 14 14"><path d="M2 2L12 12M12 2L2 12" stroke="#0000f4" stroke-width="3" stroke-linecap="square"/></svg>
<svg class="a" style="left:1322.4px;top:464.8px" width="14" height="14" viewBox="0 0 14 14"><path d="M2 2L12 12M12 2L2 12" stroke="#0000f4" stroke-width="3" stroke-linecap="square"/></svg>
<svg class="a" style="left:1448px;top:519.5px" width="14" height="14" viewBox="0 0 14 14"><path d="M2 2L12 12M12 2L2 12" stroke="#0000f4" stroke-width="3" stroke-linecap="square"/></svg>
<svg class="a" style="left:306px;top:74px" width="1307" height="838" viewBox="0 0 1307 838"><path d="M110 391.5L926 428.4" stroke="#ffff00" stroke-width="2.7"/><path d="M952 429.5L1150 438.6" stroke="#ffff00" stroke-width="2.7"/></svg>
<svg class="a" style="left:336px;top:845px" width="50" height="36" viewBox="0 0 50 36"><path d="M6.2 31.5V10" stroke="#00e4ec" stroke-width="2.6"/><path d="M6.2 4L9 13Q6.2 11.5 3.4 13Z" fill="#00e4ec"/><path d="M6 31.8H26" stroke="#f00000" stroke-width="2.6"/><path d="M34 31.8L25.5 29.2Q24 31.8 25.5 34.4Z" fill="#f00000"/><circle cx="6" cy="31.8" r="1.8" fill="#20c020"/></svg>
<div class="t" style="left:341.5px;top:836.00px;font-size:12px;color:#fff;">Z</div>
<div class="t" style="left:342px;top:867.00px;font-size:12px;color:#fff;">Y</div>
<div class="t" style="left:373px;top:867.00px;font-size:12px;color:#fff;">X</div>
<div class="a" style="left:305px;top:918px;width:1310px;height:20px;background:#a0a2a0;border-top:1px solid #fff;border-left:1px solid #fff"></div>
<div class="t" style="left:309.5px;top:923.00px;font-size:11px;color:#5e5e6a;">Message Bar</div>
<svg class="a" style="left:1585px;top:923px" width="8" height="10" viewBox="0 0 8 10"><path d="M1.5 0.5H6.5M2.5 0.5V5.5M5.5 0.5V5.5M0.5 5.5H7.5M4 5.5V9.5" stroke="#555" stroke-width="1.1" fill="none"/><rect x="2.5" y="0.5" width="2" height="5" fill="#555"/></svg>
<svg class="a" style="left:1601px;top:923px" width="9" height="9" viewBox="0 0 9 9"><path d="M0.5 0.5L8.5 8.5M8.5 0.5L0.5 8.5" stroke="#555" stroke-width="1.3"/></svg>
<div class="a" style="left:309px;top:941px;width:90px;height:21px;background:linear-gradient(#fbfbfb,#eef0f3 50%,#dfe3ea);border:1px solid #e0f0f4;border-bottom:none;border-radius:4px 4px 0 0"></div>
<svg class="a" style="left:312px;top:943px" width="14" height="14" viewBox="0 0 14 14"><rect x="0.75" y="0.75" width="12.5" height="12.5" rx="1.5" fill="#3d6fb0" stroke="#000" stroke-width="1.5"/><circle cx="7" cy="3.6" r="1.3" fill="#fff"/><path d="M7 6V11.5" stroke="#fff" stroke-width="2.2"/></svg>
<div class="t" style="left:329.5px;top:946.00px;font-size:11px;color:#000;">Message Bar</div>
<svg class="a" style="left:407px;top:943px" width="14" height="14" viewBox="0 0 14 14"><rect x="0.75" y="0.75" width="12.5" height="12.5" fill="#f8f080" stroke="#333" stroke-width="1.2"/><path d="M1 4H13M1 6.5H13M1 9H13M1 11.5H13M4.5 1V13" stroke="#8a8a50" stroke-width=".8"/></svg>
<div class="t" style="left:424.2px;top:946.00px;font-size:11.2px;color:#fff;">Spreadsheet</div>
<div class="a" style="left:305px;top:961px;width:1309px;height:98px;background:#f0f0f0"></div>
<div class="a" style="left:308px;top:963px;width:1281px;height:94px;background:#c0c0c0;border-top:2px solid #8c8c8c;border-left:2px solid #8c8c8c"></div>
<div class="a" style="left:313px;top:969px;width:1271px;height:21px;background:#555"></div>
<div class="a" style="left:313px;top:989px;width:23px;height:57px;background:#555"></div>
<div class="a" style="left:336px;top:989px;width:1249px;height:58px;background:#e6e6e6;border-right:2px solid #8c8c8c;border-bottom:2px solid #8c8c8c;box-shadow:inset 1px 1px 0 #f6f6f6"></div>
<div class="a" style="left:336px;top:1008px;width:1247px;height:0;border-top:1px dotted #9a9a9a"></div>
<div class="a" style="left:336px;top:1026px;width:1247px;height:0;border-top:1px dotted #9a9a9a"></div>
<div class="a" style="left:585px;top:990px;width:0;height:55px;border-left:1px dotted #9a9a9a"></div>
<svg class="a" style="left:316px;top:975px" width="18" height="15" viewBox="0 0 18 15"><path d="M1.2 7.4L7.5 13.6L16.8 4.3L13.5 1L7.5 7L4.5 4Z" fill="#fff" stroke="#006000" stroke-width="1" stroke-linejoin="miter"/></svg>
<div class="t" style="left:338px;top:974.00px;font-size:12.6px;color:#f0f0f0;">Open model: M:\Marketing\Presentations - external\Webinar\Webinar - GDT Shortcuts - Mar 2016\BuildIT Files\Flatness.buildit</div>
<div class="t" style="right:336.5px;top:974.00px;font-size:11px;color:#9a9a9a;letter-spacing:-0.1px">2016-04-29 14:11:38</div>
<div class="t" style="left:339px;top:993.00px;font-size:12.5px;color:#000;letter-spacing:0.18px">Last modification</div>
<div class="t" style="left:589px;top:993.00px;font-size:12.4px;color:#000;">Thursday, March 10, 2016 19:11:09</div>
<div class="t" style="left:339px;top:1012.00px;font-size:12.5px;color:#000;letter-spacing:0.18px">Number of entities</div>
<div class="t" style="left:589px;top:1012.00px;font-size:12.4px;color:#000;">36</div>
<div class="t" style="left:339px;top:1031.00px;font-size:12.5px;color:#000;letter-spacing:0.18px">Saved in</div>
<div class="t" style="left:589px;top:1031.00px;font-size:12.4px;color:#000;">BuildIT 6.0.0 SP1</div>
<div class="a" style="left:1590px;top:963px;width:22px;height:95px;background:linear-gradient(90deg,#d6dae0,#c5cad2 50%,#98a0ac)"></div>
<div class="a" style="left:1612px;top:961px;width:2px;height:98px;background:#fff"></div>
<svg class="a" style="left:1596px;top:977px" width="12" height="12" viewBox="0 0 12 12"><rect x="0.75" y="0.75" width="10.5" height="10.5" rx="1.5" fill="#d8d8d8" stroke="#000" stroke-width="1.5"/><rect x="3" y="1" width="6" height="4" fill="#fff" stroke="#000" stroke-width="1"/><circle cx="6" cy="8.5" r="1.5" fill="none" stroke="#000" stroke-width="1.2"/></svg>
<svg class="a" style="left:1595px;top:998px" width="14" height="14" viewBox="0 0 14 14"><rect x="0.75" y="0.75" width="12.5" height="12.5" rx="1" fill="#fff" stroke="#000" stroke-width="1.5"/><rect x="1" y="1" width="12" height="2.5" fill="#000"/><path d="M3 6H11M3 8.5H9M3 11H11" stroke="#000" stroke-width="1.2"/></svg>
<svg class="a" style="left:1596px;top:1021px" width="12" height="13" viewBox="0 0 12 13"><path d="M0.5 3H11.5M4 3V1H8V3" stroke="#000" stroke-width="1.3" fill="none"/><path d="M1.5 3.5L2.5 12.5H9.5L10.5 3.5" fill="#fff" stroke="#000" stroke-width="1.4"/><path d="M4.3 5V11M6 5V11M7.7 5V11" stroke="#000" stroke-width="1"/></svg>
<div class="a" style="left:1619px;top:72px;width:299px;height:989px;background:#f0f0f0"></div>
<div class="a" style="left:1619px;top:72px;width:299px;height:1px;background:#fff"></div>
<div class="a" style="left:1619px;top:72px;width:1px;height:20px;background:#fff"></div>
<div class="a" style="left:1619px;top:92px;width:1px;height:969px;background:#f8f8f8"></div>
<div class="a" style="left:1620px;top:73px;width:298px;height:19px;background:#a0a2a0"></div>
<div class="t" style="left:1623.5px;top:77.00px;font-size:11.5px;color:#5e5e6a;">Manager</div>
<svg class="a" style="left:1890px;top:77px" width="8" height="10" viewBox="0 0 8 10"><path d="M1.5 0.5H6.5M2.5 0.5V5.5M5.5 0.5V5.5M0.5 5.5H7.5M4 5.5V9.5" stroke="#555" stroke-width="1.1" fill="none"/><rect x="2.5" y="0.5" width="2" height="5" fill="#555"/></svg>
<svg class="a" style="left:1905px;top:77px" width="9" height="9" viewBox="0 0 9 9"><path d="M0.5 0.5L8.5 8.5M8.5 0.5L0.5 8.5" stroke="#555" stroke-width="1.3"/></svg>
<div class="a" style="left:1620px;top:92px;width:298px;height:23px;background:#555"></div>
<svg class="a" style="left:1626px;top:97px" width="14" height="14" viewBox="0 0 14 14"><rect x="0.75" y="0.75" width="12.5" height="12.5" rx="1.5" fill="#fff" stroke="#000" stroke-width="1.5"/><path d="M4 3L8.5 7L4 11" stroke="#000" stroke-width="2" fill="none"/></svg>
<div class="t" style="left:1643.4px;top:100.00px;font-size:11px;color:#fff;">Command</div>
<div class="a" style="left:1706px;top:95px;width:71px;height:21px;background:linear-gradient(#fafafa,#eceef1 50%,#d6dae2);border:1px solid #e4f2f6;border-bottom:none;border-radius:4px 4px 0 0"></div>
<svg class="a" style="left:1709px;top:97px" width="14" height="14" viewBox="0 0 14 14"><rect x="0.75" y="0.75" width="12.5" height="12.5" rx="1.5" fill="#fff" stroke="#000" stroke-width="1.5"/><path d="M7 2L9.5 5.5H8.5L10.5 8.5H9L11 11.5H3L5 8.5H3.5L5.5 5.5H4.5Z" fill="#000"/><path d="M7 11V13" stroke="#000" stroke-width="1.5"/></svg>
<div class="t" style="left:1726.4px;top:100.00px;font-size:11.3px;color:#000;">Manager</div>
<svg class="a" style="left:1785px;top:97px" width="14" height="14" viewBox="0 0 14 14"><rect x="0.75" y="0.75" width="12.5" height="12.5" rx="1.5" fill="#fff" stroke="#000" stroke-width="1.5"/><circle cx="7" cy="7" r="3.2" fill="none" stroke="#000" stroke-width="2.2"/><path d="M7 2V12M2 7H12M3.5 3.5L10.5 10.5M10.5 3.5L3.5 10.5" stroke="#000" stroke-width="1.6"/><circle cx="7" cy="7" r="1.8" fill="#fff"/></svg>
<div class="t" style="left:1802px;top:100.00px;font-size:11px;color:#fff;letter-spacing:-0.2px">Process</div>
<div class="a" style="left:1620px;top:115px;width:298px;height:2px;background:#f6f6f6"></div>
<div class="a" style="left:1622px;top:117px;width:295px;height:24px;background:linear-gradient(#d5d9df 0%,#ccd0d7 45%,#b6bcc5 80%,#a3aab4 100%)"></div>
<svg class="a" style="left:1630px;top:122px" width="15" height="15" viewBox="0 0 15 15"><text x="0" y="6.5" font-family="Liberation Sans" font-size="7" font-weight="bold" fill="#000">A</text><text x="0" y="14.5" font-family="Liberation Sans" font-size="7" font-weight="bold" fill="#000">Z</text><path d="M11 0.5V12" stroke="#000" stroke-width="1.6"/><path d="M8 9L11 14L14 9Z" fill="#000"/></svg>
<svg class="a" style="left:1650.5px;top:127px" width="6" height="4" viewBox="0 0 6 4"><path d="M0 0H6L3 3.5Z" fill="#4a4f58"/></svg>
<svg class="a" style="left:1663px;top:122px" width="15" height="15" viewBox="0 0 15 15"><path d="M0.75 0.75H8.25V3.75H13.25V13.25H4.75V9.25H0.75Z" fill="#fff" stroke="#000" stroke-width="1.5"/></svg>
<svg class="a" style="left:1685px;top:122px" width="15" height="15" viewBox="0 0 15 15"><rect x="0.75" y="0.75" width="8.5" height="8.5" fill="#fff" stroke="#000" stroke-width="1.5"/><rect x="4.75" y="4.75" width="8.5" height="8.5" fill="none" stroke="#000" stroke-width="1.5"/></svg>
<svg class="a" style="left:1708px;top:123px" width="13" height="13" viewBox="0 0 13 13"><path d="M1 1L11.5 11.5" stroke="#000" stroke-width="2.4"/><path d="M1 1L11.5 11.5" stroke="#fff" stroke-width="0.8"/><path d="M0.8 0.8H7L0.8 7Z" fill="#fff" stroke="#000" stroke-width="1.2"/></svg>
<svg class="a" style="left:1899px;top:123px" width="12" height="13" viewBox="0 0 12 13"><path d="M0.7 3.2H11.3" stroke="#000" stroke-width="1.6"/><path d="M3.5 3V1.2H8.5V3" stroke="#000" stroke-width="1.2" fill="none"/><path d="M1.7 3.5L2.5 12.3H9.5L10.3 3.5" fill="#fff" stroke="#000" stroke-width="1.4"/><path d="M4.2 5.2V10.8M6 5.2V10.8M7.8 5.2V10.8" stroke="#000" stroke-width="1.1"/></svg>
<div class="a" style="left:1625px;top:148px;width:289px;height:24px;background:#f0f0f0;border:1px solid #646464"></div>
<div class="a" style="left:1646px;top:149px;width:247px;height:22px;background:#fff"></div>
<svg class="a" style="left:1627px;top:151px" width="17" height="17" viewBox="0 0 17 17"><circle cx="6.5" cy="6.5" r="5" fill="#eaf2fa" stroke="#555" stroke-width="1.3"/><path d="M10 10L15.5 15.5" stroke="#555" stroke-width="2.4" stroke-linecap="round"/><path d="M4 4.5Q5 3 7 3" stroke="#fff" stroke-width="1.2" fill="none"/></svg>
<svg class="a" style="left:1899px;top:157px" width="8" height="5" viewBox="0 0 8 5"><path d="M0 0H8L4 5Z" fill="#2a7ad0"/></svg>
<div class="a" style="left:1625px;top:175px;width:289px;height:416px;background:#fff;border:1px solid #646464"></div>
<div class="a" style="left:1637px;top:189px;width:0;height:40px;border-left:1px dotted #808080"></div>
<div class="a" style="left:1656px;top:238px;width:0;height:183px;border-left:1px dotted #808080"></div>
<div class="a" style="left:1675px;top:286px;width:0;height:107px;border-left:1px dotted #808080"></div>
<svg class="a" style="left:1633px;top:180px" width="9" height="9" viewBox="0 0 9 9"><defs><linearGradient id="tbg" x1="0" y1="0" x2="0" y2="1"><stop offset="0" stop-color="#fff"/><stop offset="1" stop-color="#d8d8d8"/></linearGradient></defs><rect x="0.5" y="0.5" width="8" height="8" rx="1" fill="url(#tbg)" stroke="#9a9a9a" stroke-width="1"/><path d="M2 4.5H7" stroke="#2c4a9a" stroke-width="1.2"/><path d="M4.5 2V7" stroke="#2c4a9a" stroke-width="1.2"/></svg>
<div class="a" style="left:1643px;top:184px;width:5px;height:0;border-top:1px dotted #808080"></div>
<svg class="a" style="left:1648px;top:178px" width="15" height="13" viewBox="0 0 15 13"><defs><linearGradient id="fg" x1="0" y1="0" x2="0" y2="1"><stop offset="0" stop-color="#f2e4b8"/><stop offset="1" stop-color="#c8ad72"/></linearGradient></defs><path d="M0.75 2.5Q0.75 0.75 2.5 0.75H5.5L7 2.5H12.5Q13.75 2.5 13.75 4V11.5Q13.75 12.25 13 12.25H1.5Q0.75 12.25 0.75 11.5Z" fill="url(#fg)" stroke="#202020" stroke-width="1.2"/><path d="M1 3.5H7" stroke="#202020" stroke-width=".8"/></svg>
<div class="t" style="left:1669.4px;top:179.00px;font-size:11px;color:#000;letter-spacing:-0.2px">Nominal</div>
<svg class="a" style="left:1633px;top:196px" width="9" height="9" viewBox="0 0 9 9"><defs><linearGradient id="tbg" x1="0" y1="0" x2="0" y2="1"><stop offset="0" stop-color="#fff"/><stop offset="1" stop-color="#d8d8d8"/></linearGradient></defs><rect x="0.5" y="0.5" width="8" height="8" rx="1" fill="url(#tbg)" stroke="#9a9a9a" stroke-width="1"/><path d="M2 4.5H7" stroke="#2c4a9a" stroke-width="1.2"/><path d="M4.5 2V7" stroke="#2c4a9a" stroke-width="1.2"/></svg>
<div class="a" style="left:1643px;top:200px;width:5px;height:0;border-top:1px dotted #808080"></div>
<svg class="a" style="left:1647px;top:192px" width="18" height="16" viewBox="0 0 18 16"><path d="M4.8 2.2Q4.2 1.3 3.2 1.3Q1.5 1.3 1.5 4.6Q1.5 7.9 3.2 7.9Q4.8 7.9 4.8 6V5H3.3" stroke="#000" stroke-width="1.3" fill="none"/><path d="M6.8 1.3V7.9H8.2Q9.8 7.9 9.8 4.6Q9.8 1.3 8.2 1.3Z" stroke="#000" stroke-width="1.3" fill="none"/><path d="M9.5 8.5L11 5.5L14.5 2L17 4.5L13.5 8Z" fill="#ff6a00" stroke="#000" stroke-width="1"/><path d="M10.5 8.5V15" stroke="#000" stroke-width="1.3"/><path d="M6.5 9.5Q5 9.5 5.5 11L7.5 14.5H5.5Q4 14.5 4.5 12.5" stroke="#000" stroke-width="1" fill="none"/></svg>
<div class="t" style="left:1669.4px;top:195.00px;font-size:11px;color:#000;letter-spacing:-0.2px">Features</div>
<svg class="a" style="left:1633px;top:212px" width="9" height="9" viewBox="0 0 9 9"><defs><linearGradient id="tbg" x1="0" y1="0" x2="0" y2="1"><stop offset="0" stop-color="#fff"/><stop offset="1" stop-color="#d8d8d8"/></linearGradient></defs><rect x="0.5" y="0.5" width="8" height="8" rx="1" fill="url(#tbg)" stroke="#9a9a9a" stroke-width="1"/><path d="M2 4.5H7" stroke="#2c4a9a" stroke-width="1.2"/><path d="M4.5 2V7" stroke="#2c4a9a" stroke-width="1.2"/></svg>
<div class="a" style="left:1643px;top:216px;width:5px;height:0;border-top:1px dotted #808080"></div>
<svg class="a" style="left:1649px;top:210px" width="14" height="12" viewBox="0 0 14 12"><path d="M0.5 3H4L5 0.5H9L10 3H13.5V11.5H0.5Z" fill="#000"/><circle cx="6.5" cy="7" r="2.5" fill="none" stroke="#fff" stroke-width="1.5"/><path d="M10.5 4.5H12.5" stroke="#fff" stroke-width="1"/></svg>
<div class="t" style="left:1669.4px;top:211.00px;font-size:11px;color:#000;letter-spacing:-0.2px">Views</div>
<svg class="a" style="left:1633px;top:228px" width="9" height="9" viewBox="0 0 9 9"><defs><linearGradient id="tbg" x1="0" y1="0" x2="0" y2="1"><stop offset="0" stop-color="#fff"/><stop offset="1" stop-color="#d8d8d8"/></linearGradient></defs><rect x="0.5" y="0.5" width="8" height="8" rx="1" fill="url(#tbg)" stroke="#9a9a9a" stroke-width="1"/><path d="M2 4.5H7" stroke="#2c4a9a" stroke-width="1.2"/></svg>
<div class="a" style="left:1643px;top:232px;width:5px;height:0;border-top:1px dotted #808080"></div>
<svg class="a" style="left:1648px;top:226px" width="16" height="13" viewBox="0 0 16 13"><defs><linearGradient id="fo" x1="0" y1="0" x2="0" y2="1"><stop offset="0" stop-color="#f6ead0"/><stop offset="1" stop-color="#c8ad72"/></linearGradient></defs><path d="M0.75 11.5V1.5Q0.75 0.75 1.5 0.75H5L6.5 2.5H12.5V5" fill="#f4e8c8" stroke="#202020" stroke-width="1.2"/><path d="M0.75 12.25L3 5H15.25L12.75 12.25Z" fill="url(#fo)" stroke="#202020" stroke-width="1.2" stroke-linejoin="round"/></svg>
<div class="t" style="left:1669.4px;top:227.00px;font-size:11px;color:#000;letter-spacing:-0.2px">Inspection</div>
<div class="a" style="left:1656px;top:248px;width:11px;height:0;border-top:1px dotted #808080"></div>
<svg class="a" style="left:1668px;top:241px" width="15" height="16" viewBox="0 0 15 16"><path d="M2.6 1.5L13 9.5L3 15" fill="none" stroke="#222" stroke-width=".8"/><path d="M2.6 11.5V1.6L10.5 5" fill="none" stroke="#000" stroke-width="2.6"/></svg>
<div class="t" style="left:1688.4px;top:243.00px;font-size:11px;color:#000;letter-spacing:-0.2px">Alignments</div>
<svg class="a" style="left:1652px;top:260px" width="9" height="9" viewBox="0 0 9 9"><defs><linearGradient id="tbg" x1="0" y1="0" x2="0" y2="1"><stop offset="0" stop-color="#fff"/><stop offset="1" stop-color="#d8d8d8"/></linearGradient></defs><rect x="0.5" y="0.5" width="8" height="8" rx="1" fill="url(#tbg)" stroke="#9a9a9a" stroke-width="1"/><path d="M2 4.5H7" stroke="#2c4a9a" stroke-width="1.2"/><path d="M4.5 2V7" stroke="#2c4a9a" stroke-width="1.2"/></svg>
<div class="a" style="left:1662px;top:264px;width:5px;height:0;border-top:1px dotted #808080"></div>
<svg class="a" style="left:1667px;top:256px" width="17" height="16" viewBox="0 0 17 16"><rect x="0" y="3.8" width="3" height="2.4" fill="#000"/><rect x="7" y="3.8" width="3" height="2.4" fill="#000"/><path d="M2.5 14.5V4Q2.5 1.5 5 1.5Q7.5 1.5 7.5 4V14.5Z" fill="#fff" stroke="#000" stroke-width="1.2"/><rect x="4.3" y="3" width="1.2" height="1.2" fill="#602020"/><path d="M4.9 8V12.5" stroke="#e00000" stroke-width="1.1"/><path d="M8 8L14.3 2.3V8.5M8.3 8.2L12.8 13.5" stroke="#1a5c9a" stroke-width="1.7" fill="none"/><rect x="13.6" y="7.8" width="1.4" height="1.4" fill="#501010"/><rect x="8.5" y="13.8" width="7.5" height="1.9" fill="#000"/></svg>
<div class="t" style="left:1688.4px;top:259.00px;font-size:11px;color:#000;letter-spacing:-0.2px">Measurements</div>
<svg class="a" style="left:1652px;top:276px" width="9" height="9" viewBox="0 0 9 9"><defs><linearGradient id="tbg" x1="0" y1="0" x2="0" y2="1"><stop offset="0" stop-color="#fff"/><stop offset="1" stop-color="#d8d8d8"/></linearGradient></defs><rect x="0.5" y="0.5" width="8" height="8" rx="1" fill="url(#tbg)" stroke="#9a9a9a" stroke-width="1"/><path d="M2 4.5H7" stroke="#2c4a9a" stroke-width="1.2"/></svg>
<div class="a" style="left:1662px;top:280px;width:5px;height:0;border-top:1px dotted #808080"></div>
<svg class="a" style="left:1667px;top:274px" width="16" height="13" viewBox="0 0 16 13"><defs><linearGradient id="fo" x1="0" y1="0" x2="0" y2="1"><stop offset="0" stop-color="#f6ead0"/><stop offset="1" stop-color="#c8ad72"/></linearGradient></defs><path d="M0.75 11.5V1.5Q0.75 0.75 1.5 0.75H5L6.5 2.5H12.5V5" fill="#f4e8c8" stroke="#202020" stroke-width="1.2"/><path d="M0.75 12.25L3 5H15.25L12.75 12.25Z" fill="url(#fo)" stroke="#202020" stroke-width="1.2" stroke-linejoin="round"/></svg>
<div class="t" style="left:1688.4px;top:275.00px;font-size:11px;color:#000;letter-spacing:-0.2px">Actual</div>
<svg class="a" style="left:1671px;top:292px" width="9" height="9" viewBox="0 0 9 9"><defs><linearGradient id="tbg" x1="0" y1="0" x2="0" y2="1"><stop offset="0" stop-color="#fff"/><stop offset="1" stop-color="#d8d8d8"/></linearGradient></defs><rect x="0.5" y="0.5" width="8" height="8" rx="1" fill="url(#tbg)" stroke="#9a9a9a" stroke-width="1"/><path d="M2 4.5H7" stroke="#2c4a9a" stroke-width="1.2"/><path d="M4.5 2V7" stroke="#2c4a9a" stroke-width="1.2"/></svg>
<div class="a" style="left:1681px;top:296px;width:5px;height:0;border-top:1px dotted #808080"></div>
<svg class="a" style="left:1686px;top:290px" width="15" height="13" viewBox="0 0 15 13"><defs><linearGradient id="fg" x1="0" y1="0" x2="0" y2="1"><stop offset="0" stop-color="#f2e4b8"/><stop offset="1" stop-color="#c8ad72"/></linearGradient></defs><path d="M0.75 2.5Q0.75 0.75 2.5 0.75H5.5L7 2.5H12.5Q13.75 2.5 13.75 4V11.5Q13.75 12.25 13 12.25H1.5Q0.75 12.25 0.75 11.5Z" fill="url(#fg)" stroke="#202020" stroke-width="1.2"/><path d="M1 3.5H7" stroke="#202020" stroke-width=".8"/></svg>
<div class="a" style="left:1705.0px;top:288px;width:0px;height:0px;"></div>
<div class="a" style="left:1705px;top:288px;width:39px;height:16px;background:#3399ff"></div>
<div class="t" style="left:1707.4px;top:291.00px;font-size:11px;color:#fff;letter-spacing:-0.2px">Best Fit</div>
<svg class="a" style="left:1671px;top:308px" width="9" height="9" viewBox="0 0 9 9"><defs><linearGradient id="tbg" x1="0" y1="0" x2="0" y2="1"><stop offset="0" stop-color="#fff"/><stop offset="1" stop-color="#d8d8d8"/></linearGradient></defs><rect x="0.5" y="0.5" width="8" height="8" rx="1" fill="url(#tbg)" stroke="#9a9a9a" stroke-width="1"/><path d="M2 4.5H7" stroke="#2c4a9a" stroke-width="1.2"/><path d="M4.5 2V7" stroke="#2c4a9a" stroke-width="1.2"/></svg>
<div class="a" style="left:1681px;top:312px;width:5px;height:0;border-top:1px dotted #808080"></div>
<svg class="a" style="left:1686px;top:306px" width="15" height="13" viewBox="0 0 15 13"><defs><linearGradient id="fg" x1="0" y1="0" x2="0" y2="1"><stop offset="0" stop-color="#f2e4b8"/><stop offset="1" stop-color="#c8ad72"/></linearGradient></defs><path d="M0.75 2.5Q0.75 0.75 2.5 0.75H5.5L7 2.5H12.5Q13.75 2.5 13.75 4V11.5Q13.75 12.25 13 12.25H1.5Q0.75 12.25 0.75 11.5Z" fill="url(#fg)" stroke="#202020" stroke-width="1.2"/><path d="M1 3.5H7" stroke="#202020" stroke-width=".8"/></svg>
<div class="t" style="left:1707.4px;top:307.00px;font-size:11px;color:#000;letter-spacing:-0.2px">Points (3D)</div>
<svg class="a" style="left:1671px;top:324px" width="9" height="9" viewBox="0 0 9 9"><defs><linearGradient id="tbg" x1="0" y1="0" x2="0" y2="1"><stop offset="0" stop-color="#fff"/><stop offset="1" stop-color="#d8d8d8"/></linearGradient></defs><rect x="0.5" y="0.5" width="8" height="8" rx="1" fill="url(#tbg)" stroke="#9a9a9a" stroke-width="1"/><path d="M2 4.5H7" stroke="#2c4a9a" stroke-width="1.2"/><path d="M4.5 2V7" stroke="#2c4a9a" stroke-width="1.2"/></svg>
<div class="a" style="left:1681px;top:328px;width:5px;height:0;border-top:1px dotted #808080"></div>
<svg class="a" style="left:1686px;top:322px" width="15" height="13" viewBox="0 0 15 13"><defs><linearGradient id="fg" x1="0" y1="0" x2="0" y2="1"><stop offset="0" stop-color="#f2e4b8"/><stop offset="1" stop-color="#c8ad72"/></linearGradient></defs><path d="M0.75 2.5Q0.75 0.75 2.5 0.75H5.5L7 2.5H12.5Q13.75 2.5 13.75 4V11.5Q13.75 12.25 13 12.25H1.5Q0.75 12.25 0.75 11.5Z" fill="url(#fg)" stroke="#202020" stroke-width="1.2"/><path d="M1 3.5H7" stroke="#202020" stroke-width=".8"/></svg>
<div class="t" style="left:1707.4px;top:323.00px;font-size:11px;color:#d04c55;letter-spacing:-0.2px">Real Flatness</div>
<div class="a" style="left:1675px;top:344px;width:11px;height:0;border-top:1px dotted #808080"></div>
<svg class="a" style="left:1687.5px;top:338px" width="12" height="12" viewBox="0 0 12 12"><circle cx="5.5" cy="5.5" r="3.8" fill="none" stroke="#000" stroke-width="1.5"/><path d="M5.5 0V11M0 5.5H11" stroke="#000" stroke-width="1.3"/></svg>
<div class="t" style="left:1707.4px;top:339.00px;font-size:11px;color:#d04c55;letter-spacing:-0.2px">Point_High_BF</div>
<div class="a" style="left:1675px;top:360px;width:11px;height:0;border-top:1px dotted #808080"></div>
<svg class="a" style="left:1687.5px;top:354px" width="12" height="12" viewBox="0 0 12 12"><circle cx="5.5" cy="5.5" r="3.8" fill="none" stroke="#000" stroke-width="1.5"/><path d="M5.5 0V11M0 5.5H11" stroke="#000" stroke-width="1.3"/></svg>
<div class="t" style="left:1707.4px;top:355.00px;font-size:11px;color:#d04c55;letter-spacing:-0.2px">Point_High_MZ</div>
<div class="a" style="left:1675px;top:376px;width:11px;height:0;border-top:1px dotted #808080"></div>
<svg class="a" style="left:1687.5px;top:370px" width="12" height="12" viewBox="0 0 12 12"><circle cx="5.5" cy="5.5" r="3.8" fill="none" stroke="#000" stroke-width="1.5"/><path d="M5.5 0V11M0 5.5H11" stroke="#000" stroke-width="1.3"/></svg>
<div class="t" style="left:1707.4px;top:371.00px;font-size:11px;color:#d04c55;letter-spacing:-0.2px">Point_Low_BF</div>
<div class="a" style="left:1675px;top:392px;width:11px;height:0;border-top:1px dotted #808080"></div>
<svg class="a" style="left:1687.5px;top:386px" width="12" height="12" viewBox="0 0 12 12"><circle cx="5.5" cy="5.5" r="3.8" fill="none" stroke="#000" stroke-width="1.5"/><path d="M5.5 0V11M0 5.5H11" stroke="#000" stroke-width="1.3"/></svg>
<div class="t" style="left:1707.4px;top:387.00px;font-size:11px;color:#d04c55;letter-spacing:-0.2px">Point_Low_MZ</div>
<div class="a" style="left:1656px;top:408px;width:11px;height:0;border-top:1px dotted #808080"></div>
<svg class="a" style="left:1666px;top:402px" width="17" height="12" viewBox="0 0 17 12"><defs><linearGradient id="an" x1="0" y1="0" x2="1" y2="0"><stop offset="0" stop-color="#ff0000"/><stop offset=".3" stop-color="#ffd000"/><stop offset=".5" stop-color="#00e000"/><stop offset=".75" stop-color="#00c8ff"/><stop offset="1" stop-color="#2020ff"/></linearGradient></defs><rect x="0.75" y="0.75" width="15.5" height="10.5" fill="url(#an)" stroke="#000" stroke-width="1.5"/></svg>
<div class="t" style="left:1688.4px;top:403.00px;font-size:11px;color:#000;letter-spacing:-0.2px">Analyses</div>
<svg class="a" style="left:1652px;top:420px" width="9" height="9" viewBox="0 0 9 9"><defs><linearGradient id="tbg" x1="0" y1="0" x2="0" y2="1"><stop offset="0" stop-color="#fff"/><stop offset="1" stop-color="#d8d8d8"/></linearGradient></defs><rect x="0.5" y="0.5" width="8" height="8" rx="1" fill="url(#tbg)" stroke="#9a9a9a" stroke-width="1"/><path d="M2 4.5H7" stroke="#2c4a9a" stroke-width="1.2"/><path d="M4.5 2V7" stroke="#2c4a9a" stroke-width="1.2"/></svg>
<div class="a" style="left:1662px;top:424px;width:5px;height:0;border-top:1px dotted #808080"></div>
<svg class="a" style="left:1667px;top:418px" width="16" height="12" viewBox="0 0 16 12"><path d="M4 0.75H14Q15.25 0.75 15.25 2V10Q15.25 11.25 14 11.25H4L0.75 6Z" fill="#fff090" stroke="#000" stroke-width="1.5" stroke-linejoin="round"/><circle cx="6" cy="6" r="1.3" fill="#000"/></svg>
<div class="t" style="left:1688.4px;top:419.00px;font-size:11px;color:#000;letter-spacing:-0.2px">Annotations</div>
<div class="a" style="left:1625px;top:611px;width:286px;height:1px;background:#a0a0a0"></div>
<div class="a" style="left:1625px;top:612px;width:286px;height:1px;background:#fff"></div>
<div class="a" style="left:1627px;top:652px;width:285px;height:401px;background:#f0f0f0;border:1px solid;border-color:#fff #696969 #696969 #fff;box-shadow:inset -1px -1px 0 #a0a0a0"></div>
<div class="a" style="left:1679px;top:634px;width:40px;height:19px;background:#f0f0f0;border:1px solid;border-color:#fff #696969 transparent #fff;box-shadow:inset -1px 0 0 #a0a0a0"></div>
<div class="a" style="left:1719px;top:634px;width:43px;height:19px;background:#f0f0f0;border:1px solid;border-color:#fff #696969 transparent #fff;box-shadow:inset -1px 0 0 #a0a0a0"></div>
<div class="a" style="left:1628px;top:632px;width:52px;height:21px;background:#f0f0f0;border:1px solid;border-color:#fff #696969 transparent #fff;box-shadow:inset -1px 0 0 #a0a0a0"></div>
<div class="t" style="left:1635.5px;top:638.00px;font-size:11px;color:#0000ff;letter-spacing:-0.3px">General</div>
<div class="t" style="left:1688.5px;top:640.00px;font-size:11px;color:#000;letter-spacing:-0.3px">Note</div>
<div class="t" style="left:1733.3px;top:640.00px;font-size:11px;color:#000;letter-spacing:-0.3px">Info</div>
<div class="t" style="left:1641.6px;top:671.00px;font-size:11px;color:#000;letter-spacing:-0.4px">Color</div>
<div class="a" style="left:1698px;top:664px;width:199px;height:24px;background:#fff;border:1px solid #7a7a7a"></div>
<div class="t" style="left:1703.4px;top:671.00px;font-size:11px;color:#000;letter-spacing:-0.3px">Black</div>
<div class="a" style="left:1827px;top:669px;width:46px;height:14px;background:#000"></div>
<svg class="a" style="left:1884px;top:674px" width="8" height="4" viewBox="0 0 8 4"><path d="M0 0H8L4 4Z" fill="#000"/></svg>
<svg class="a" style="left:1698px;top:698px" width="13" height="13" viewBox="0 0 13 13"><defs><linearGradient id="cb" x1="0" y1="0" x2="1" y2="1"><stop offset="0" stop-color="#dcdcdc"/><stop offset="1" stop-color="#fff"/></linearGradient></defs><rect x="0.5" y="0.5" width="12" height="12" fill="#8f8f8f"/><rect x="1.5" y="1.5" width="10" height="10" fill="url(#cb)"/><path d="M3.5 6.5L5.5 9.5L9.5 3" stroke="#3c4aa0" stroke-width="1.6" fill="none"/></svg>
<div class="t" style="left:1714.4px;top:700.00px;font-size:11px;color:#000;letter-spacing:-0.3px">Display Object</div>
<svg class="a" style="left:1714px;top:721px" width="13" height="13" viewBox="0 0 13 13"><defs><linearGradient id="cb" x1="0" y1="0" x2="1" y2="1"><stop offset="0" stop-color="#dcdcdc"/><stop offset="1" stop-color="#fff"/></linearGradient></defs><rect x="0.5" y="0.5" width="12" height="12" fill="#8f8f8f"/><rect x="1.5" y="1.5" width="10" height="10" fill="url(#cb)"/><path d="M3.5 6.5L5.5 9.5L9.5 3" stroke="#3c4aa0" stroke-width="1.6" fill="none"/></svg>
<div class="t" style="left:1730.4px;top:723.00px;font-size:11px;color:#000;letter-spacing:-0.2px">Put in Show</div>
<svg class="a" style="left:1714px;top:744px" width="13" height="13" viewBox="0 0 13 13"><defs><linearGradient id="cb" x1="0" y1="0" x2="1" y2="1"><stop offset="0" stop-color="#dcdcdc"/><stop offset="1" stop-color="#fff"/></linearGradient></defs><rect x="0.5" y="0.5" width="12" height="12" fill="#8f8f8f"/><rect x="1.5" y="1.5" width="10" height="10" fill="url(#cb)"/></svg>
<div class="t" style="left:1730.4px;top:746.00px;font-size:11px;color:#000;letter-spacing:-0.3px">Display Name</div>
<div class="t" style="left:1641px;top:769.00px;font-size:11px;color:#000;letter-spacing:-0.2px">Associations</div>
<div class="a" style="left:1641px;top:786px;width:255px;height:245px;background:#fff;border:1px solid #828790"></div>
<div class="a" style="left:0px;top:1060px;width:301px;height:1px;background:#fafafa"></div>
<div class="a" style="left:305px;top:1059px;width:1310px;height:2px;background:#f2f2f2"></div>
<div class="a" style="left:1619px;top:1059px;width:299px;height:2px;background:#f4f4f4"></div>
<div class="a" style="left:301px;top:1059px;width:4px;height:2px;background:#555"></div>
<div class="a" style="left:1615px;top:1059px;width:4px;height:2px;background:#555"></div>
<div class="a" style="left:0px;top:1061px;width:1918px;height:18px;background:linear-gradient(#333 0,#333 1px,#3f4350 1px,#41454f 6px,#3d404a 7px,#333 8px,#323232 100%)"></div>
<div class="t" style="left:4.3px;top:1067.00px;font-size:11.5px;color:#fff;">Point3</div>
</body></html>
